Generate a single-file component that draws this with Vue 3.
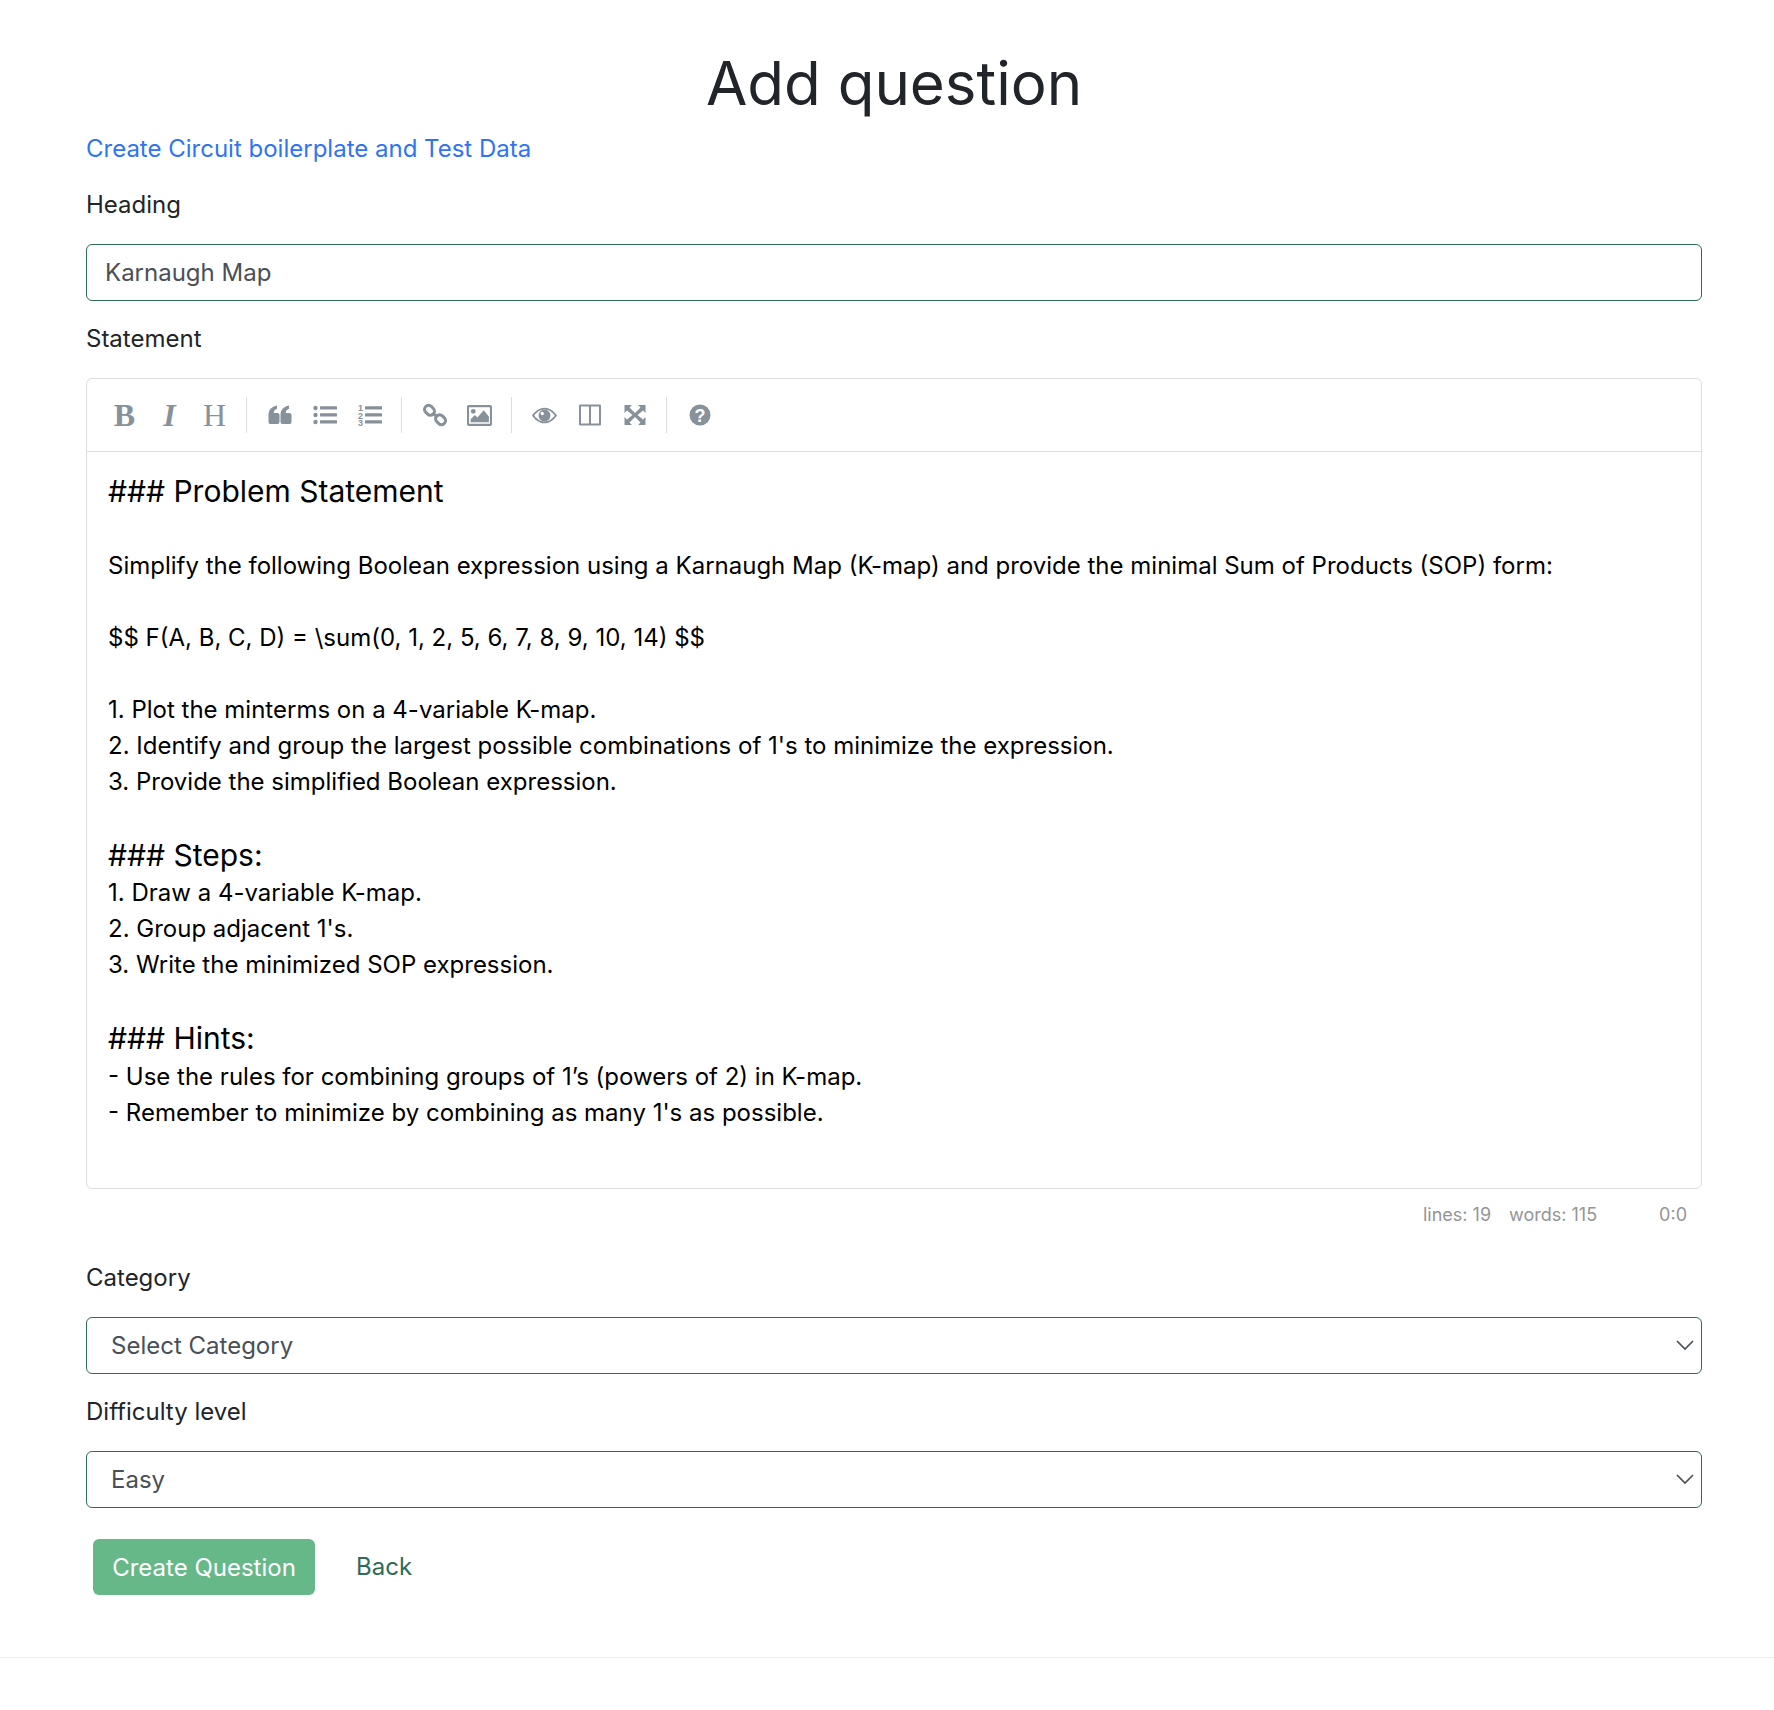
<script setup>
const lines = [
  { text: '### Problem Statement', head: true },
  { text: '' },
  { text: 'Simplify the following Boolean expression using a Karnaugh Map (K-map) and provide the minimal Sum of Products (SOP) form:' },
  { text: '' },
  { text: '$$ F(A, B, C, D) = \\sum(0, 1, 2, 5, 6, 7, 8, 9, 10, 14) $$' },
  { text: '' },
  { text: '1. Plot the minterms on a 4-variable K-map.' },
  { text: "2. Identify and group the largest possible combinations of 1's to minimize the expression." },
  { text: '3. Provide the simplified Boolean expression.' },
  { text: '' },
  { text: '### Steps:', head: true },
  { text: '1. Draw a 4-variable K-map.' },
  { text: "2. Group adjacent 1's." },
  { text: '3. Write the minimized SOP expression.' },
  { text: '' },
  { text: '### Hints:', head: true },
  { text: '- Use the rules for combining groups of 1’s (powers of 2) in K-map.' },
  { text: "- Remember to minimize by combining as many 1's as possible." },
  { text: '' }
]
</script>

<template>
  <div class="page">
    <main class="container">
      <h1 class="title">Add question</h1>
      <a class="circuit-link" href="#">Create Circuit boilerplate and Test Data</a>

      <label class="label first">Heading</label>
      <input class="field" type="text" value="Karnaugh Map" />

      <label class="label">Statement</label>
      <div class="editor">
        <div class="toolbar">
          <button class="tool letter bold">B</button>
          <button class="tool letter italic">I</button>
          <button class="tool letter">H</button>
          <i class="sep"></i>
          <button class="tool">
            <svg viewBox="0 0 24 24" width="24" height="24"><path d="M.5 12C.5 7 3.500 3.500 9 2.500v3.300C7 6.500 5.800 7.800 5.800 10h3.400c1.400 0 2.300.9 2.300 2.300v6.400c0 1.400-.9 2.300-2.300 2.300H2.800C1.400 21 .5 20.100.5 18.700zM12.500 12c0-5 3-8.500 8.500-9.500v3.300C19 6.500 17.800 7.800 17.800 10h3.400c1.400 0 2.300.9 2.300 2.300v6.400c0 1.400-.9 2.300-2.300 2.300h-6.400c-1.400 0-2.300-.9-2.300-2.300z"/></svg>
          </button>
          <button class="tool">
            <svg viewBox="0 0 24 24" width="24" height="24"><circle cx="2.500" cy="5" r="2.200"/><circle cx="2.500" cy="12" r="2.200"/><circle cx="2.500" cy="19" r="2.200"/><rect x="7" y="3.300" width="17" height="3.200" rx=".5"/><rect x="7" y="10.300" width="17" height="3.200" rx=".5"/><rect x="7" y="17.300" width="17" height="3.200" rx=".5"/></svg>
          </button>
          <button class="tool">
            <svg viewBox="0 0 24 24" width="24" height="24"><text x="0" y="8" class="num">1</text><text x="0" y="15.500" class="num">2</text><text x="0" y="23" class="num">3</text><rect x="7" y="3.300" width="17" height="3.200" rx=".5"/><rect x="7" y="10.300" width="17" height="3.200" rx=".5"/><rect x="7" y="17.300" width="17" height="3.200" rx=".5"/></svg>
          </button>
          <i class="sep"></i>
          <button class="tool">
            <svg class="chain" viewBox="0 0 24 24" width="24" height="24"><rect x="2.500" y="2" width="8" height="10.500" rx="3.800" transform="rotate(-45 6.500 7.300)"/><rect x="13.500" y="11.500" width="8" height="10.500" rx="3.800" transform="rotate(-45 17.500 16.700)"/><path d="M9.500 10l5 4"/></svg>
          </button>
          <button class="tool">
            <svg viewBox="0 0 24 24" width="25" height="25"><path fill-rule="evenodd" d="M1.500 2h21c.8 0 1.500.7 1.500 1.500v17c0 .8-.7 1.500-1.500 1.500h-21C.7 22 0 21.300 0 20.500v-17C0 2.700.7 2 1.500 2zM2 4v16h20V4z"/><circle cx="6" cy="8" r="2.300"/><path d="M3.500 18.500v-3l4-4 2.500 2.500 6-7 5 6v5.500z"/></svg>
          </button>
          <i class="sep"></i>
          <button class="tool">
            <svg viewBox="0 0 24 24" width="25" height="25"><path fill-rule="evenodd" d="M12 4.500c5.500 0 9.600 3.800 12 7.500-2.400 3.700-6.500 7.500-12 7.500S2.400 15.700 0 12c2.400-3.700 6.500-7.500 12-7.500zM12 6.300C7.800 6.300 4.400 9 2.200 12c2.200 3 5.600 5.700 9.800 5.700s7.600-2.700 9.800-5.700C19.600 9 16.200 6.300 12 6.300z"/><path fill-rule="evenodd" d="M12 6.300a5.700 5.700 0 1 1 0 11.400 5.700 5.700 0 0 1 0-11.400zM9.800 8.500a1.600 1.600 0 1 0 0 3.200 1.600 1.600 0 0 0 0-3.200z"/></svg>
          </button>
          <button class="tool">
            <svg viewBox="0 0 24 24" width="24" height="24"><path fill-rule="evenodd" d="M2.500 1.500h19c1 0 1.500.5 1.500 1.500v18c0 1-.5 1.500-1.500 1.500h-19c-1 0-1.500-.5-1.500-1.500V3c0-1 .5-1.500 1.500-1.500zM3 3.500v17h8v-17zm10 0v17h8v-17z"/></svg>
          </button>
          <button class="tool">
            <svg viewBox="0 0 24 24" width="24" height="24"><path d="M1.500 2h7.500L6.500 4.500 12 10l5.500-5.500L15 2h7.500v8L20 7.500 14.500 12l5.500 4.500 2.500-2.500v8H15l2.500-2.500L12 14l-5.500 5.500L9 22H1.500v-8L4 16.500 9.500 12 4 7.500 1.500 10z"/></svg>
          </button>
          <i class="sep"></i>
          <button class="tool">
            <svg viewBox="0 0 24 24" width="24" height="24"><circle cx="12" cy="12" r="10.500"/><text x="12" y="18.500" text-anchor="middle" class="help">?</text></svg>
          </button>
        </div>
        <div class="code">
          <div v-for="(line, i) in lines" :key="i" :class="['code-line', { head: line.head }]">{{ line.text || '&nbsp;' }}</div>
        </div>
      </div>
      <div class="status">
        <span class="stat">lines: 19</span>
        <span class="stat">words: 115</span>
        <span class="stat cursor">0:0</span>
      </div>

      <label class="label category">Category</label>
      <select class="field select">
        <option>Select Category</option>
      </select>

      <label class="label">Difficulty level</label>
      <select class="field select">
        <option>Easy</option>
      </select>

      <div class="actions">
        <button class="btn-create">Create Question</button>
        <a class="back" href="#">Back</a>
      </div>
    </main>
    <hr class="rule" />
  </div>
</template>

<style scoped>
.page {
  height: 1710px;
  background: #fff;
  font-family: Inter, "Liberation Sans", sans-serif;
  color: #212529;
  overflow: hidden;
}

.container {
  width: 1616px;
  margin: 0 auto 0 86px;
  display: flex;
  flex-direction: column;
  align-items: flex-start;
}

.title {
  width: 100%;
  margin: 0;
  padding-top: 43px;
  text-align: center;
  font-size: 60px;
  line-height: 80px;
  font-weight: 400;
}

.circuit-link {
  margin-top: 8px;
  font-size: 24px;
  line-height: 36px;
  color: #2f74f0;
  text-decoration: none;
}

.label {
  margin-top: 20px;
  height: 57px;
  font-size: 24px;
  line-height: 36px;
}

.label.category {
  margin-top: 0;
}

.field {
  box-sizing: border-box;
  width: 100%;
  height: 57px;
  padding: 0 18px;
  border: 1px solid #2f6b57;
  border-radius: 6px;
  background: #fff;
  font-family: inherit;
  font-size: 24px;
  color: #495057;
  outline: none;
}

.select {
  appearance: none;
  padding-left: 24px;
  background-image: url("data:image/svg+xml,%3Csvg xmlns='http://www.w3.org/2000/svg' viewBox='0 0 18 11'%3E%3Cpath d='M1 1l8 8 8-8' fill='none' stroke='%23495057' stroke-width='1.7'/%3E%3C/svg%3E");
  background-repeat: no-repeat;
  background-position: right 7px center;
  background-size: 18px 11px;
}

.editor {
  box-sizing: border-box;
  width: 100%;
  height: 811px;
  border: 1px solid #ddd;
  border-radius: 6px;
}

.toolbar {
  box-sizing: border-box;
  height: 73px;
  display: flex;
  align-items: center;
  padding: 0 0 0 15px;
  border-bottom: 1px solid #ddd;
}

.tool {
  width: 45px;
  height: 36px;
  padding: 0;
  border: 0;
  background: none;
  display: flex;
  align-items: center;
  justify-content: center;
}

.tool svg {
  fill: #87919a;
}

.tool svg.chain {
  fill: none;
  stroke: #87919a;
  stroke-width: 3;
}

.letter {
  font-family: "Liberation Serif", serif;
  font-size: 32px;
  line-height: 1;
  color: #87919a;
}

.bold {
  font-weight: 700;
}

.italic {
  font-style: italic;
  font-weight: 700;
}

.num {
  font-family: "Liberation Sans", sans-serif;
  font-size: 9px;
  font-weight: 700;
}

.help {
  font-family: "Liberation Sans", sans-serif;
  font-size: 18px;
  font-weight: 700;
  fill: #fff;
}

.sep {
  width: 1px;
  height: 36px;
  margin: 0 10px 0 9px;
  background: #ddd;
}

.code {
  padding: 20px 20px 0 21px;
  color: #000;
  font-size: 24px;
  line-height: 36px;
}

.code-line {
  white-space: pre;
}

.code-line.head {
  font-size: 30px;
  line-height: 39.5px;
  font-weight: 400;
}

.status {
  box-sizing: border-box;
  width: 100%;
  height: 71px;
  display: flex;
  justify-content: flex-end;
  padding: 12px 15px 0 0;
  font-size: 18px;
  line-height: 27px;
  color: #959595;
}

.stat {
  margin-left: 18px;
}

.stat.cursor {
  margin-left: 62px;
}

.actions {
  display: flex;
  align-items: center;
  margin-top: 31px;
  margin-left: 7px;
}

.btn-create {
  width: 222px;
  height: 56px;
  border: 0;
  border-radius: 6px;
  background: #66b888;
  color: #fff;
  font-family: inherit;
  font-size: 24px;
}

.back {
  margin-left: 41px;
  margin-bottom: 2px;
  font-size: 24px;
  color: #2f6b57;
  text-decoration: none;
}

.rule {
  margin: 62px 0 0;
  border: 0;
  border-top: 1px solid #eee;
}
</style>

<style>
body {
  background: #fff;
}
</style>
